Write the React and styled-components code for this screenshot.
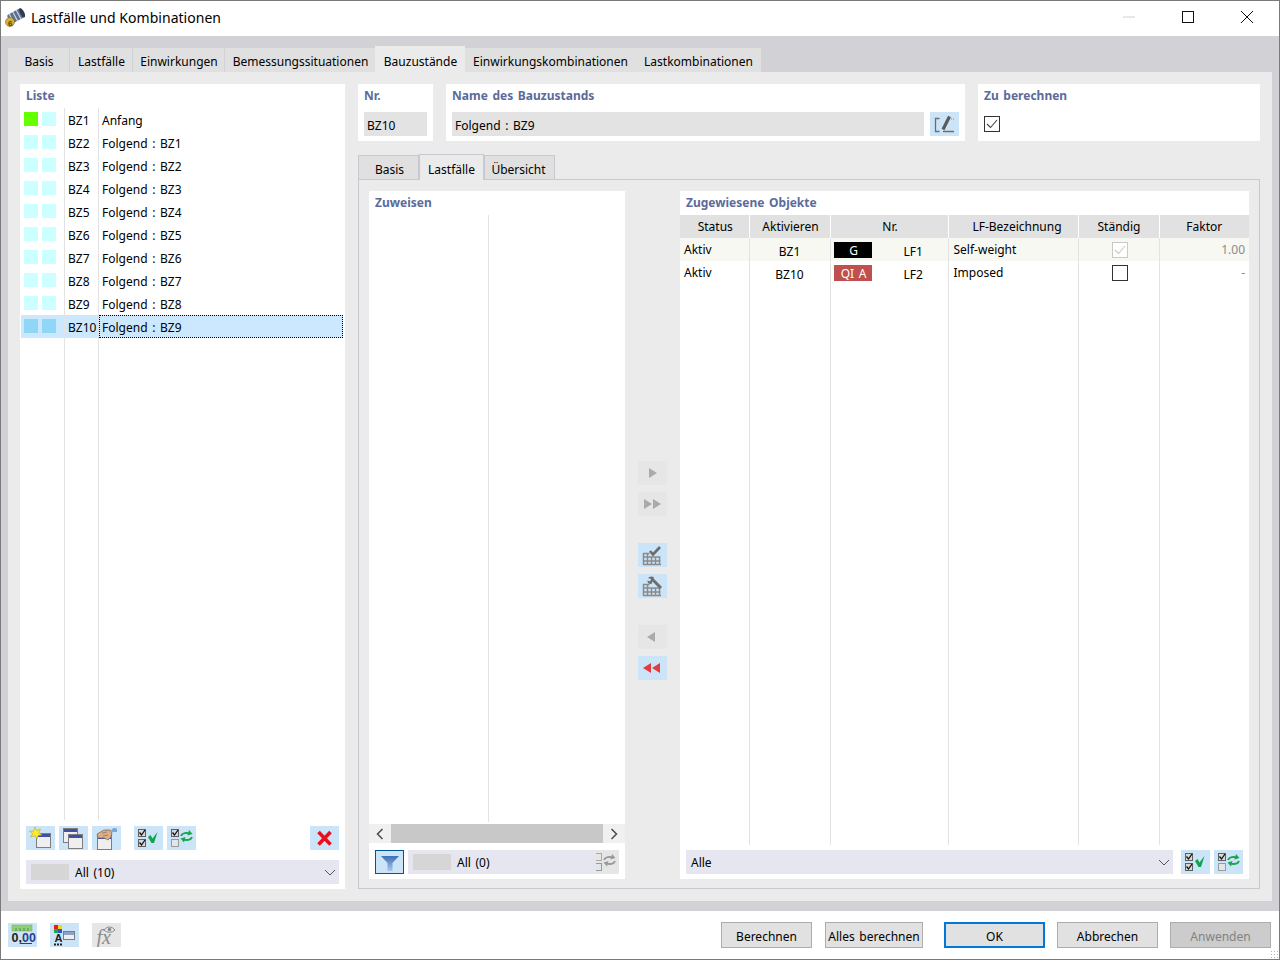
import React from "react";
import styled, { createGlobalStyle } from "styled-components";

const Global = createGlobalStyle`
  html, body { margin: 0; padding: 0; background: #fff; }
  body { font-family: "Noto Sans", "Open Sans", "Liberation Sans", sans-serif; font-size: 12px; color: #000; word-spacing: 1.5px; }
  * { box-sizing: border-box; }
`;

const WinBtnSmall = styled.div`width: 18px; display: flex; justify-content: center;`;
const Window = styled.div`
  width: 1280px; height: 960px; display: flex; flex-direction: column;
  border: 1px solid #7a7a7a; background: #fff; overflow: hidden;
`;
const TitleBar = styled.div`
  height: 35px; flex: none; display: flex; align-items: center; background: #fff; padding: 0 0 3px 4px;
`;
const TitleText = styled.div`font-size: 14px; margin-left: 6px; flex: 1; word-spacing: 0; letter-spacing: .03px;`;
const WinControls = styled.div`display: flex; height: 100%; align-items: center; margin-right: 3px;`;
const WinBtn = styled.div`width: 59px; display: flex; justify-content: center;`;
const Body = styled.div`
  flex: 1; background: #d2d2d6; padding: 11px 7px 10px 7px; display: flex; flex-direction: column; min-height: 0;
`;
const TabStrip = styled.div`display: flex; height: 25px; align-items: flex-end; flex: none;`;
const Tab = styled.div`
  height: ${p => p.$active ? "26px" : "24px"}; width: ${p => p.$w}px; display: flex; align-items: center; justify-content: center;
  background: ${p => p.$active ? "#ebebeb" : "#e0e0e0"}; margin-right: ${p => p.$gap ?? 1}px; white-space: nowrap;
  padding: ${p => p.$active ? "5px" : "3px"} 0 0 1px;
`;
const MainPanel = styled.div`
  flex: 1; background: #ebebeb; padding: 12px; display: flex; gap: 13px; min-height: 0;
`;
const Card = styled.div`background: #fff; display: flex; flex-direction: column; min-height: 0;`;
const ListCard = styled(Card)`width: 325px; flex: none; padding-bottom: 5px;`;
const CardTitle = styled.div`
  height: 24px; flex: none; padding: 0 0 2px 6px; font-weight: 700; color: #5c6b99; display: flex; align-items: center; font-size: 12px;
`;
const ListTable = styled.div`
  flex: 1; min-height: 0; display: flex; flex-direction: column; padding-left: 1px; padding-right: 2px; margin-bottom: 6px;
`;
const ListRow = styled.div`
  height: 23px; flex: none; display: grid; grid-template-columns: 44px 34px 1fr; align-items: stretch;
  background: ${p => p.$sel ? "#cce8ff" : "transparent"};
`;
const ListFiller = styled.div`flex: 1; display: grid; grid-template-columns: 44px 34px 1fr;`;
const ListCell = styled.div`
  border-right: ${p => p.$line ? "1px solid #e3e3e3" : "0"}; display: flex; align-items: center; padding-left: 3px; padding-top: 1px; white-space: nowrap;
  outline: ${p => p.$focus ? "1px dotted #000" : "0"}; outline-offset: -1px;
`;
const SwatchCell = styled.div`
  border-right: 1px solid #e3e3e3; display: flex; gap: 4px; padding: 4px 0 0 3px;
`;
const Swatch = styled.div`width: 14px; height: 14px; background: ${p => p.$c};`;
const ToolRow = styled.div`display: flex; gap: 4px; padding: 0 6px; flex: none; height: 24px;`;
const ToolSpacer = styled.div`flex: 1;`;
const ToolSep = styled.div`width: 5px;`;
const IconBtn = styled.div`
  width: ${p => p.$clip ? 23 : 29}px; height: 24px; flex: none; background: ${p => p.$off ? "#e6e6e6" : "#cce4f7"};
  border: ${p => p.$focus ? "1px solid #005499" : "0"}; overflow: ${p => p.$clip ? "hidden" : "visible"};
  svg { display: block; margin: ${p => p.$focus ? "-1px" : p.$clip ? "0 0 0 -6px" : "0"}; }
`;
const Combo = styled.div`
  height: 24px; background: #e6e6f0; display: flex; align-items: center; flex: ${p => p.$fill ? 1 : "none"};
  margin: ${p => p.$m || 0}; padding-left: ${p => p.$pl ?? 5}px; min-width: 0; position: relative;
`;
const Chip = styled.div`width: 38px; height: 16px; background: #d6d6d6; margin-right: 6px;`;
const ComboText = styled.div`flex: 1;`;
const Right = styled.div`flex: 1; display: flex; flex-direction: column; min-width: 0;`;
const TopRow = styled.div`display: flex; gap: 13px; height: 57px; flex: none;`;
const NrCard = styled(Card)`width: 75px; flex: none;`;
const NameCard = styled(Card)`width: 519px; flex: none;`;
const CalcCard = styled(Card)`flex: 1;`;
const FieldValue = styled.div`
  height: 24px; background: #e3e3e3; display: flex; align-items: center; padding-left: 3px; padding-top: 2px; flex: ${p => p.$fill ? 1 : "none"};
  width: ${p => p.$w ? p.$w + "px" : "auto"};
`;
const FieldRow = styled.div`display: flex; gap: 6px; padding: 4px 6px 0 6px; align-items: center;`;
const CheckWrap = styled.div`padding: 6px;`;
const SubTabs = styled.div`display: flex; height: 26px; margin-top: 13px; align-items: flex-end; flex: none; margin-bottom: -1px; position: relative;`;
const SubTab = styled.div`
  width: ${p => p.$w}px; height: ${p => p.$active ? "26px" : "25px"}; display: flex; align-items: center; justify-content: center; padding-top: 4px;
  padding-left: ${p => p.$pl ?? 0}px; padding-right: ${p => p.$pr ?? 0}px;
  background: ${p => p.$active ? "#ebebeb" : "#e0e0e0"}; border: 1px solid #c8c8d0; border-bottom: ${p => p.$active ? "0" : "1px solid #c8c8d0"};
`;
const SubPanel = styled.div`
  flex: 1; border: 1px solid #c8c8d0; padding: 11px 10px 9px; display: flex; min-height: 0;
`;
const AssignCard = styled(Card)`width: 256px; flex: none; padding-bottom: 5px;`;
const AssignList = styled.div`
  flex: 1; min-height: 0; display: grid; grid-template-columns: 120px 1fr; margin-bottom: 2px;
`;
const AssignCol = styled.div`border-right: ${p => p.$line ? "1px solid #e3e3e3" : "0"};`;
const HScroll = styled.div`height: 19px; background: #f0f0f0; display: flex; align-items: center; flex: none; margin-bottom: 7px;`;
const ScrollArrow = styled.div`width: 22px; display: flex; justify-content: center;`;
const ScrollThumb = styled.div`flex: 1; height: 19px; background: #c8c8c8;`;
const AssignTools = styled.div`display: flex; gap: 4px; padding: 0 6px; flex: none;`;
const MidCol = styled.div`
  width: 55px; flex: none; display: flex; flex-direction: column; align-items: center; padding-top: 270px; gap: 7px;
`;
const MidGap = styled.div`height: 13px;`;
const AssignedCard = styled(Card)`flex: 1; min-width: 0; padding-bottom: 5px;`;
const TableWrap = styled.div`flex: 1; min-height: 0; margin-bottom: 5px;`;
const Grid = styled.table`
  width: 100%; height: 100%; border-collapse: collapse; table-layout: fixed;
`;
const Th = styled.th`
  height: 23px; background: #e1e1e1; font-weight: 400; border-right: 1px solid #fff; padding: 0 0 0 ${p => p.$pl ?? 2}px; text-align: center;
  &:last-child { border-right: 0; }
`;
const Td = styled.td`
  height: 23px; padding: 0 4px 0 ${p => p.$pl ?? 4}px; border-right: 1px solid #e3e3e3; background: ${p => p.$tint ? "#f7f8f2" : "transparent"};
  text-align: ${p => p.$align || "left"}; color: ${p => p.$muted ? "#8a8a8a" : "#000"}; white-space: nowrap; vertical-align: middle;
  &:last-child { border-right: 0; }
`;
const CellText = styled.span`position: relative; top: ${p => p.$dy ?? 0}px;`;
const NrCell = styled.div`display: flex; align-items: center;`;
const Badge = styled.div`
  width: 38px; height: 16px; background: ${p => p.$c}; color: #fff; display: flex; align-items: center; justify-content: center; padding: 1px 0 0 2px; flex: none;
`;
const NrText = styled.div`margin-left: 32px; padding-top: 3px;`;
const FillerTd = styled.td`border-right: 1px solid #e3e3e3; padding: 0; &:last-child { border-right: 0; }`;
const AssignedTools = styled.div`display: flex; gap: 4px; padding: 0 6px; flex: none;`;
const CheckBox = styled.div`
  width: 16px; height: 16px; border: 1px solid ${p => p.$off ? "#c8c8c8" : "#333"}; background: #fff; display: inline-flex;
  vertical-align: middle; align-items: center; justify-content: center;
`;
const Footer = styled.div`
  height: 48px; flex: none; background: #fff; display: flex; align-items: center; padding: 0 8px 0 7px; position: relative;
`;
const FootIcons = styled.div`display: flex; gap: 13px; flex: 1;`;
const FootBtns = styled.div`display: flex; align-items: center;`;
const DlgBtn = styled.div`
  height: 26px; width: ${p => p.$w}px; margin-left: ${p => p.$ml}px; display: flex; align-items: center; justify-content: center; padding-top: 2px;
  background: ${p => p.$off ? "#cccccc" : "#e1e1e1"}; border: ${p => p.$def ? "2px solid #0078d7" : "1px solid #adadad"};
  color: ${p => p.$off ? "#838383" : "#000"}; white-space: nowrap;
`;
const Grip = styled.div`
  position: absolute; right: 0; bottom: 0; width: 9px; height: 9px;
  background-image: radial-gradient(#b5b5b5 1px, transparent 1px); background-size: 3px 3px;
`;

const Svg = ({ children, w = 29, h = 24 }) => <svg width={w} height={h} viewBox={`0 0 ${w} ${h}`}>{children}</svg>;

const Win = ({ x, y, w = 14, h = 14, c = "#7d7d7d", bar = "#3f51a3" }) => (
  <g>
    <rect x={x + .5} y={y + .5} width={w} height={h} fill="#efefef" stroke={c} />
    <rect x={x + 1} y={y + 1} width={w - 1} height={3} fill={bar} />
  </g>
);
const Box = ({ x, y, on }) => (
  <g>
    <rect x={x + .5} y={y + .5} width={7} height={7} fill={on ? "#d8d8d8" : "#dfe6ee"} stroke={on ? "#5f5f5f" : "#9a9a9a"} />
    {on && <path d={`M${x + 1.5} ${y + 3.5}l2 2.5 3.5-5`} stroke="#111" strokeWidth="1.3" fill="none" />}
  </g>
);
const IcNew = () => <Svg><Win x={10} y={7} /><path d="M9 1l1.6 3.6L14.5 3l-1.8 3.6L16 9l-3.8.4L11 13 9 9.8 4.5 11 6.8 7.8 3.5 5l3.9.3z" fill="#ffe92e" stroke="#a89a1f" strokeWidth=".5" /></Svg>;
const IcCopy = () => <Svg><Win x={4} y={2} /><Win x={9} y={8} /></Svg>;
const IcHand = () => <Svg><Win x={5} y={9} /><path d="M5 8l7-4 6 0 2 3-1 4-3 3-4-2-6 0z" fill="#d9b08a" stroke="#7d6048" strokeWidth=".7" /><path d="M10 7l5-1M11 10l5-1" stroke="#7d6048" strokeWidth=".6" /><path d="M19 5c1-3 4-4 6-2v3h-4z" fill="#7aa3d6" /></Svg>;
const IcCheckAll = () => <Svg><Box x={4} y={3} on /><Box x={4} y={13} on /><path d="M14 11l2.500-2 2 3.500 5-6.500-3.500 11h-2.500z" fill="#0fa64b" /></Svg>;
const IcSwap = ({ grey }) => {
  const g = grey ? "#9a9a9a" : "#1aa650";
  return (
    <Svg>
      {grey ? <rect x="4.500" y="3.500" width="7" height="7" fill="#e6e6e6" stroke="#aaa" /> : <Box x={4} y={3} on />}
      <Box x={4} y={13} />
      <path d="M14 10c1-3 6-4 9-2M25 11c-1 3-6 4-9 2" stroke={g} strokeWidth="2" fill="none" />
      <path d="M22 4l3.500 4-5 1.500zM17 16.500l-3.500-4 5-1.500z" fill={g} />
    </Svg>
  );
};
const IcX = () => <Svg><path d="M8.500 6l12 12.500M20.500 6l-12 12.500" stroke="#e8101f" strokeWidth="3.600" /></Svg>;
const IcEdit = () => <Svg><path d="M9.500 6.500h-4v13h4M13 19.500h11" stroke="#6d6d6d" strokeWidth="1.300" fill="none" /><path d="M13 17.500l6.500-13" stroke="#5a5a5a" strokeWidth="3.200" /><path d="M21 7h3" stroke="#888" strokeDasharray="1 1" /></Svg>;
const IcFilter = () => <Svg><defs><linearGradient id="fg" x1="0" y1="0" x2="0" y2="1"><stop offset="0" stopColor="#3f6fb5" /><stop offset="1" stopColor="#a9c8ee" /></linearGradient></defs><path d="M6 6h18l-6.500 7v8h-5v-8z" fill="url(#fg)" /></Svg>;
const GridBase = () => <g stroke="#8a8a8a" fill="none" strokeWidth="1.500"><path d="M5.500 21.500v-11h6M5.500 14h17M5.500 18h17M9.500 10v12M13.500 14v8M17.500 14v8M21.500 14v8M5 21.500h18" /></g>;
const IcGridCheck = () => <Svg><GridBase /><path d="M12 8l3 3.500 7-7.500" stroke="#6b6b6b" strokeWidth="2.600" fill="none" /></Svg>;
const IcGridWrench = () => <Svg><GridBase /><path d="M14 5l9 9" stroke="#6e6e6e" strokeWidth="3" /><path d="M16 3.500c-2-2-5-1-6 .5l3 1-1 2.500-2.500-1c-.5 2 1.500 4 4 3.500z" fill="#6e6e6e" /></Svg>;
const IcTri = ({ dir = 1, n = 1, c = "#aaa" }) => {
  const draw = (cx) => dir > 0 ? `M${cx - 4} 7l8 5-8 5z` : `M${cx + 4} 7l-8 5 8 5z`;
  return <Svg>{n === 1 ? <path d={draw(dir > 0 ? 15 : 13)} fill={c} /> : <><path d={draw(dir > 0 ? 10 : 9)} fill={c} /><path d={draw(dir > 0 ? 19 : 18)} fill={c} /></>}</Svg>;
};
const IcZero = () => <Svg><rect x="4" y="2" width="20" height="6" fill="#8fcf7a" stroke="#6fa65c" strokeWidth=".5" /><path d="M8 5v3M12 5v3M16 5v3M20 5v3" stroke="#5c8f4a" /><text x="3.500" y="19" fontFamily="Liberation Sans, sans-serif" fontWeight="700" fontSize="12.500" fill="#222" wordSpacing="0">0,<tspan fill="#27408b">00</tspan></text><path d="M13 20.500h11" stroke="#27408b" /></Svg>;
const IcColor = () => <Svg><rect x="4" y="2" width="4" height="4" fill="#e02020" /><rect x="8" y="2" width="4" height="4" fill="#f5d90a" /><rect x="4" y="6" width="4" height="4" fill="#1fa84a" /><rect x="8" y="6" width="4" height="4" fill="#2b55d6" /><text x="4.500" y="19" fontFamily="Liberation Sans, sans-serif" fontWeight="700" fontSize="11" fill="#222">A</text><path d="M4 21.500h2M7 21.500h2M10 21.500h2" stroke="#222" strokeWidth="2" /><Win x={13} y={8} w={11} h={8} bar="#8ea2c9" /></Svg>;
const IcFx = () => <Svg><text x="4.500" y="21" fontFamily="Liberation Serif, serif" fontStyle="italic" fontSize="20" fill="#8a8a8a">fx</text><path d="M12 7c3-4 8-4 11 0-3 3-8 3-11 0z" fill="none" stroke="#8a8a8a" /><circle cx="17.500" cy="6.500" r="1.800" fill="#8a8a8a" /></Svg>;
const Chevron = () => <svg width="12" height="7" viewBox="0 0 12 7"><path d="M1 1l5 5 5-5" stroke="#555" fill="none" /></svg>;
const ScrollChev = ({ left }) => <svg width="8" height="12" viewBox="0 0 8 12"><path d={left ? "M6.500 1L1.500 6l5 5" : "M1.500 1l5 5-5 5"} stroke="#505050" strokeWidth="1.600" fill="none" /></svg>;
const Tick = ({ c = "#444" }) => <svg width="12" height="10" viewBox="0 0 12 10"><path d="M1 5l3.500 3.500L11 1" stroke={c} strokeWidth="1.100" fill="none" /></svg>;
const AppIcon = () => (
  <svg width="20" height="20" viewBox="0 0 20 20">
    <g transform="rotate(-28 11 9)">
      <rect x="3" y="4" width="16" height="10" rx="2" fill="#5d6f8c" />
      <path d="M6 4v10M10 4v10M14 4v10" stroke="#c9d4e4" strokeWidth="1.200" />
      <ellipse cx="18" cy="9" rx="2" ry="5" fill="#2e3b52" />
    </g>
    <circle cx="5" cy="15" r="4.500" fill="#d6b13a" stroke="#7d6a20" strokeWidth=".6" />
    <text x="3" y="18.500" fontFamily="Liberation Sans, sans-serif" fontWeight="700" fontSize="8" fill="#4a3d0c">6</text>
  </svg>
);

const rows = [
  ["BZ1", "Anfang"], ["BZ2", "Folgend : BZ1"], ["BZ3", "Folgend : BZ2"], ["BZ4", "Folgend : BZ3"], ["BZ5", "Folgend : BZ4"],
  ["BZ6", "Folgend : BZ5"], ["BZ7", "Folgend : BZ6"], ["BZ8", "Folgend : BZ7"], ["BZ9", "Folgend : BZ8"], ["BZ10", "Folgend : BZ9"],
];
const tabs = [["Basis", 61], ["Lastfälle", 62], ["Einwirkungen", 91], ["Bemessungssituationen", 150, 0], ["Bauzustände", 90, 0], ["Einwirkungskombinationen", 170, 0], ["Lastkombinationen", 126]];

export default function App() {
  return (
    <Window>
      <Global />
      <TitleBar>
        <AppIcon />
        <TitleText>Lastfälle und Kombinationen</TitleText>
        <WinControls>
          <WinBtn><svg width="12" height="2"><path d="M0 1h12" stroke="#d0d0d0" /></svg></WinBtn>
          <WinBtn><svg width="12" height="12"><rect x=".5" y=".5" width="11" height="11" fill="none" stroke="#111" /></svg></WinBtn>
          <WinBtn><svg width="12" height="12"><path d="M0 0l12 12M12 0L0 12" stroke="#111" /></svg></WinBtn>
        </WinControls>
      </TitleBar>
      <Body>
        <TabStrip>
          {tabs.map(([t, w, gap], i) => <Tab key={t} $w={w} $gap={gap} $active={i === 4}>{t}</Tab>)}
        </TabStrip>
        <MainPanel>
          <ListCard>
            <CardTitle>Liste</CardTitle>
            <ListTable>
              {rows.map(([a, b], i) => (
                <ListRow key={a} $sel={i === 9}>
                  <SwatchCell>
                    <Swatch $c={i === 0 ? "#66ff00" : i === 9 ? "#8fd6f7" : "#ccffff"} />
                    <Swatch $c={i === 9 ? "#8fd6f7" : "#ccffff"} />
                  </SwatchCell>
                  <ListCell $line>{a}</ListCell>
                  <ListCell $focus={i === 9}>{b}</ListCell>
                </ListRow>
              ))}
              <ListFiller><SwatchCell /><ListCell $line /><ListCell /></ListFiller>
            </ListTable>
            <ToolRow>
              <IconBtn><IcNew /></IconBtn>
              <IconBtn><IcCopy /></IconBtn>
              <IconBtn><IcHand /></IconBtn>
              <ToolSep />
              <IconBtn><IcCheckAll /></IconBtn>
              <IconBtn><IcSwap /></IconBtn>
              <ToolSpacer />
              <IconBtn><IcX /></IconBtn>
            </ToolRow>
            <Combo $m="10px 6px 0 6px">
              <Chip />
              <ComboText>All (10)</ComboText>
              <WinBtnSmall><Chevron /></WinBtnSmall>
            </Combo>
          </ListCard>
          <Right>
            <TopRow>
              <NrCard>
                <CardTitle>Nr.</CardTitle>
                <FieldRow><FieldValue $w={63}>BZ10</FieldValue></FieldRow>
              </NrCard>
              <NameCard>
                <CardTitle>Name des Bauzustands</CardTitle>
                <FieldRow>
                  <FieldValue $fill>Folgend : BZ9</FieldValue>
                  <IconBtn><IcEdit /></IconBtn>
                </FieldRow>
              </NameCard>
              <CalcCard>
                <CardTitle>Zu berechnen</CardTitle>
                <CheckWrap><CheckBox><Tick /></CheckBox></CheckWrap>
              </CalcCard>
            </TopRow>
            <SubTabs>
              <SubTab $w={61} $pl={2}>Basis</SubTab>
              <SubTab $w={65} $active>Lastfälle</SubTab>
              <SubTab $w={71} $pr={2}>Übersicht</SubTab>
            </SubTabs>
            <SubPanel>
              <AssignCard>
                <CardTitle>Zuweisen</CardTitle>
                <AssignList><AssignCol $line /><AssignCol /></AssignList>
                <HScroll>
                  <ScrollArrow><ScrollChev left /></ScrollArrow>
                  <ScrollThumb />
                  <ScrollArrow><ScrollChev /></ScrollArrow>
                </HScroll>
                <AssignTools>
                  <IconBtn $focus><IcFilter /></IconBtn>
                  <Combo $fill>
                    <Chip />
                    <ComboText>All (0)</ComboText>
                    <IconBtn $off $clip><IcSwap grey /></IconBtn>
                  </Combo>
                </AssignTools>
              </AssignCard>
              <MidCol>
                <IconBtn $off><IcTri /></IconBtn>
                <IconBtn $off><IcTri n={2} /></IconBtn>
                <MidGap />
                <IconBtn><IcGridCheck /></IconBtn>
                <IconBtn><IcGridWrench /></IconBtn>
                <MidGap />
                <IconBtn $off><IcTri dir={-1} /></IconBtn>
                <IconBtn><IcTri dir={-1} n={2} c="#e23b3b" /></IconBtn>
              </MidCol>
              <AssignedCard>
                <CardTitle>Zugewiesene Objekte</CardTitle>
                <TableWrap>
                  <Grid>
                    <colgroup>
                      <col style={{ width: 69 }} /><col style={{ width: 81 }} /><col style={{ width: 118 }} />
                      <col style={{ width: 130 }} /><col style={{ width: 81 }} /><col />
                    </colgroup>
                    <thead>
                      <tr><Th>Status</Th><Th>Aktivieren</Th><Th>Nr.</Th><Th $pl={8}>LF-Bezeichnung</Th><Th $pl={1}>Ständig</Th><Th $pl={0}>Faktor</Th></tr>
                    </thead>
                    <tbody>
                      <tr>
                        <Td $tint><CellText $dy={0}>Aktiv</CellText></Td>
                        <Td $tint $align="center"><CellText $dy={2}>BZ1</CellText></Td>
                        <Td $tint $pl={3}><NrCell><Badge $c="#000">G</Badge><NrText>LF1</NrText></NrCell></Td>
                        <Td $tint $pl={5}><CellText $dy={0}>Self-weight</CellText></Td>
                        <Td $tint $align="center" $pl={6}><CheckBox $off><Tick c="#c8c8c8" /></CheckBox></Td>
                        <Td $tint $align="right" $muted>1.00</Td>
                      </tr>
                      <tr>
                        <Td><CellText $dy={0}>Aktiv</CellText></Td>
                        <Td $align="center"><CellText $dy={2}>BZ10</CellText></Td>
                        <Td $pl={3}><NrCell><Badge $c="#c0504d">QI A</Badge><NrText>LF2</NrText></NrCell></Td>
                        <Td $pl={5}><CellText $dy={0}>Imposed</CellText></Td>
                        <Td $align="center" $pl={6}><CheckBox /></Td>
                        <Td $align="right" $muted>-</Td>
                      </tr>
                      <tr style={{ height: "100%" }}>
                        <FillerTd /><FillerTd /><FillerTd /><FillerTd /><FillerTd /><FillerTd />
                      </tr>
                    </tbody>
                  </Grid>
                </TableWrap>
                <AssignedTools>
                  <Combo $fill $m="0 4px 0 0">
                    <ComboText>Alle</ComboText>
                    <WinBtnSmall><Chevron /></WinBtnSmall>
                  </Combo>
                  <IconBtn><IcCheckAll /></IconBtn>
                  <IconBtn><IcSwap /></IconBtn>
                </AssignedTools>
              </AssignedCard>
            </SubPanel>
          </Right>
        </MainPanel>
      </Body>
      <Footer>
        <FootIcons>
          <IconBtn><IcZero /></IconBtn>
          <IconBtn><IcColor /></IconBtn>
          <IconBtn $off><IcFx /></IconBtn>
        </FootIcons>
        <FootBtns>
          <DlgBtn $w={91} $ml={0}>Berechnen</DlgBtn>
          <DlgBtn $w={98} $ml={13}>Alles berechnen</DlgBtn>
          <DlgBtn $w={101} $ml={21} $def>OK</DlgBtn>
          <DlgBtn $w={101} $ml={12}>Abbrechen</DlgBtn>
          <DlgBtn $w={101} $ml={12} $off>Anwenden</DlgBtn>
        </FootBtns>
        <Grip />
      </Footer>
    </Window>
  );
}
